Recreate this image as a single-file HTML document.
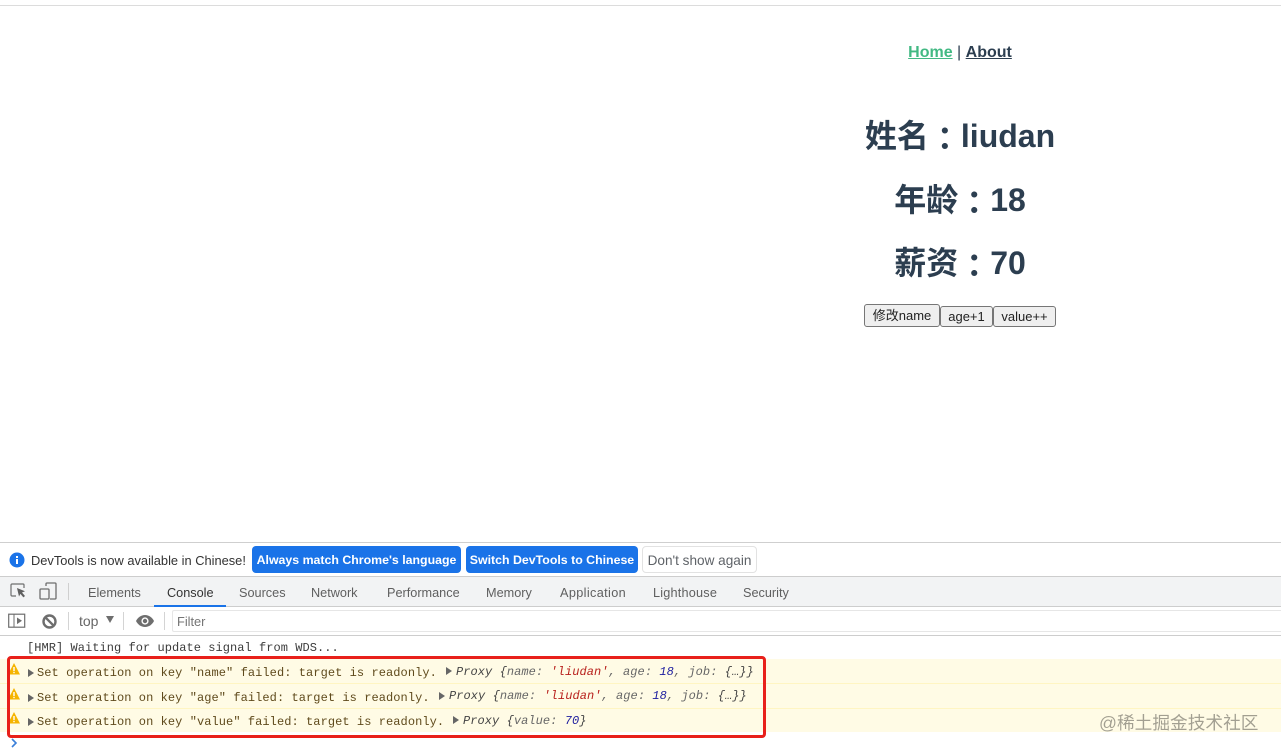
<!DOCTYPE html>
<html lang="zh">
<head>
<meta charset="utf-8">
<title>Readonly</title>
<style>
html,body{margin:0;padding:0;background:#fff;}
body{width:1281px;height:754px;position:relative;overflow:hidden;font-family:"Liberation Sans","Noto Sans CJK SC",sans-serif;}
.a{position:absolute;white-space:pre;}
.bar{position:absolute;left:0;width:1281px;}
.h{font-weight:700;font-size:32px;color:#2c3e50;left:640px;width:640px;text-align:center;line-height:40px;}
.c{font-family:"Noto Sans CJK TC",sans-serif;line-height:0;position:relative;top:3px;}
.btn{position:absolute;box-sizing:border-box;background:#efefef;border:1px solid #767676;border-radius:3px;font-size:13px;color:#222;text-align:center;line-height:19px;}
.tab{position:absolute;top:586px;font-size:12.7px;color:#5f5f5f;line-height:15px;white-space:pre;}
.ib{position:absolute;top:546px;height:27px;box-sizing:border-box;border-radius:4px;background:#1a73e8;color:#fff;font-size:12.35px;font-weight:700;line-height:29px;text-align:center;white-space:pre;}
.m{position:absolute;font-family:"Liberation Mono",monospace;font-size:12px;letter-spacing:.07px;line-height:14px;color:#5f4a1c;white-space:pre;}
.o{position:absolute;font-family:"Liberation Mono",monospace;font-size:12px;letter-spacing:.06px;font-style:italic;line-height:14px;color:#444;white-space:pre;}
.s{color:#b8201c}.n{color:#1c1c9f}.k{color:#666}
.tri{position:absolute;width:0;height:0;border-left:6px solid #666;border-top:4px solid transparent;border-bottom:4px solid transparent;}
svg{position:absolute;overflow:visible;}
</style>
</head>
<body>
<div class="bar" style="top:5px;height:1px;background:#dcdcdc"></div>

<div class="a" style="left:640px;width:640px;text-align:center;top:43px;font-size:16px;line-height:19px;font-weight:700;color:#2c3e50"><span style="color:#42b983;text-decoration:underline">Home</span><span style="font-weight:400"> | </span><span style="text-decoration:underline">About</span></div>

<div class="a h" style="top:116px">姓名<span class="c" lang="zh-TW">：</span>liudan</div>
<div class="a h" style="top:180px">年龄<span class="c" lang="zh-TW">：</span>18</div>
<div class="a h" style="top:243px">薪资<span class="c" lang="zh-TW">：</span>70</div>

<div class="btn" style="left:864px;top:304px;width:76px;height:23px;line-height:22px">修改name</div>
<div class="btn" style="left:940px;top:306px;width:53px;height:21px">age+1</div>
<div class="btn" style="left:993px;top:306px;width:63px;height:21px">value++</div>

<!-- infobar -->
<div class="bar" style="top:542px;height:1px;background:#cfcfcf"></div>
<div class="bar" style="top:543px;height:33px;background:#fff"></div>
<svg style="left:9px;top:552px" width="16" height="16" viewBox="0 0 16 16"><circle cx="8" cy="8" r="7.5" fill="#1a73e8"/><rect x="7" y="7" width="2" height="5" fill="#fff"/><rect x="7" y="4" width="2" height="2" fill="#fff"/></svg>
<div class="a" style="left:31px;top:553px;font-size:12.85px;line-height:15px;color:#333">DevTools is now available in Chinese!</div>
<div class="ib" style="left:252px;width:209px">Always match Chrome's language</div>
<div class="ib" style="left:466px;width:172px">Switch DevTools to Chinese</div>
<div class="ib" style="left:642px;width:115px;background:#fff;border:1px solid #e2e2e2;color:#5f6368;font-weight:400;line-height:27px;font-size:13.6px">Don't show again</div>

<!-- tabs -->
<div class="bar" style="top:576px;height:30px;background:#f2f3f4;border-top:1px solid #cdcdcd;box-sizing:border-box"></div>
<div class="bar" style="top:606px;height:1px;background:#cdcdcd"></div>
<svg style="left:10px;top:582px" width="18" height="18" viewBox="0 0 18 18" fill="none"><path d="M6 14H2a1 1 0 0 1-1-1V3a1 1 0 0 1 1-1h11a1 1 0 0 1 1 1v3" stroke="#6e6e6e" stroke-width="1.2"/><path d="M7 6l8 3.2-3 1.3 3 3.5-1.6 1.4-3-3.5L9 14.5z" fill="#5f5f5f"/></svg>
<svg style="left:39px;top:582px" width="18" height="18" viewBox="0 0 18 18" fill="none" stroke="#6e6e6e" stroke-width="1.3"><path d="M7 4V2a1 1 0 0 1 1-1h8a1 1 0 0 1 1 1v14a1 1 0 0 1-1 1h-5"/><rect x="1" y="7" width="9" height="10" rx="1"/></svg>
<div class="a" style="left:68px;top:583px;width:1px;height:17px;background:#cfcfcf"></div>
<div class="tab" style="left:88px">Elements</div>
<div class="tab" style="left:167px;color:#333">Console</div>
<div class="a" style="left:154px;top:605px;width:72px;height:2px;background:#1a73e8"></div>
<div class="tab" style="left:239px">Sources</div>
<div class="tab" style="left:311px">Network</div>
<div class="tab" style="left:387px">Performance</div>
<div class="tab" style="left:486px">Memory</div>
<div class="tab" style="left:560px;letter-spacing:.36px">Application</div>
<div class="tab" style="left:653px;letter-spacing:.2px">Lighthouse</div>
<div class="tab" style="left:743px">Security</div>

<!-- console toolbar -->
<div class="bar" style="top:607px;height:28px;background:#fff"></div>
<div class="bar" style="top:635px;height:1px;background:#cdcdcd"></div>
<svg style="left:8px;top:613px" width="18" height="16" viewBox="0 0 18 16" fill="none"><rect x=".7" y="1.2" width="16" height="13" stroke="#6e6e6e" stroke-width="1.2"/><rect x="5.5" y="1" width="1" height="13.4" fill="#6e6e6e"/><path d="M9 4.5l5 3.3-5 3.3z" fill="#6e6e6e"/></svg>
<svg style="left:42px;top:614px" width="15" height="15" viewBox="0 0 15 15" fill="none" stroke="#6e6e6e" stroke-width="2.4"><circle cx="7.5" cy="7.5" r="6"/><path d="M3.3 3.3l8.4 8.4"/></svg>
<div class="a" style="left:68px;top:612px;width:1px;height:18px;background:#d4d4d4"></div>
<div class="a" style="left:79px;top:614px;font-size:14px;line-height:15px;color:#666">top</div>
<div class="a" style="left:106px;top:616px;width:0;height:0;border-left:4px solid transparent;border-right:4px solid transparent;border-top:7px solid #6e6e6e"></div>
<div class="a" style="left:123px;top:612px;width:1px;height:18px;background:#d4d4d4"></div>
<svg style="left:136px;top:615px" width="18" height="12" viewBox="0 0 18 12"><path d="M9 0C5 0 1.700 2.500 0 6c1.700 3.500 5 6 9 6s7.300-2.500 9-6c-1.700-3.500-5-6-9-6z" fill="#6e6e6e"/><circle cx="9" cy="6" r="3.600" fill="#fff"/><circle cx="9" cy="6" r="2.200" fill="#6e6e6e"/></svg>
<div class="a" style="left:164px;top:612px;width:1px;height:18px;background:#d4d4d4"></div>
<div class="a" style="left:172px;top:610px;width:1109px;height:22px;box-sizing:border-box;border:1px solid #e6e6e6;border-right:0;border-radius:2px 0 0 2px"></div>
<div class="a" style="left:177px;top:614px;font-size:12.8px;line-height:15px;color:#757575">Filter</div>

<!-- console -->
<div class="a" style="left:27px;top:641px;font-family:'Liberation Mono',monospace;font-size:12px;letter-spacing:.05px;line-height:14px;color:#3c3c3c">[HMR] Waiting for update signal from WDS...</div>

<div class="bar" style="top:659px;height:73px;background:#fffbe5"></div>
<div class="bar" style="top:683px;height:1px;background:#fff5c2"></div>
<div class="bar" style="top:708px;height:1px;background:#fff5c2"></div>

<svg style="left:8px;top:663px" width="12" height="12" viewBox="0 0 12 12"><path d="M6 0L12 11.500H0z" fill="#f5b400"/><rect x="5.300" y="4" width="1.400" height="4" fill="#fff"/><rect x="5.300" y="8.800" width="1.400" height="1.400" fill="#fff"/></svg>
<svg style="left:8px;top:688px" width="12" height="12" viewBox="0 0 12 12"><path d="M6 0L12 11.500H0z" fill="#f5b400"/><rect x="5.300" y="4" width="1.400" height="4" fill="#fff"/><rect x="5.300" y="8.800" width="1.400" height="1.400" fill="#fff"/></svg>
<svg style="left:8px;top:712px" width="12" height="12" viewBox="0 0 12 12"><path d="M6 0L12 11.500H0z" fill="#f5b400"/><rect x="5.300" y="4" width="1.400" height="4" fill="#fff"/><rect x="5.300" y="8.800" width="1.400" height="1.400" fill="#fff"/></svg>

<div class="tri" style="left:28px;top:669px"></div>
<div class="tri" style="left:28px;top:694px"></div>
<div class="tri" style="left:28px;top:718px"></div>

<div class="m" style="left:37px;top:666px">Set operation on key "name" failed: target is readonly.</div>
<div class="m" style="left:37px;top:691px">Set operation on key "age" failed: target is readonly.</div>
<div class="m" style="left:37px;top:715px">Set operation on key "value" failed: target is readonly.</div>

<div class="tri" style="left:446px;top:667px"></div>
<div class="tri" style="left:439px;top:692px"></div>
<div class="tri" style="left:453px;top:716px"></div>

<div class="o" style="left:456px;top:665px">Proxy {<span class="k">name: </span><span class="s">'liudan'</span><span class="k">, age: </span><span class="n">18</span><span class="k">, job: </span>{…}}</div>
<div class="o" style="left:449px;top:689px">Proxy {<span class="k">name: </span><span class="s">'liudan'</span><span class="k">, age: </span><span class="n">18</span><span class="k">, job: </span>{…}}</div>
<div class="o" style="left:463px;top:714px">Proxy {<span class="k">value: </span><span class="n">70</span>}</div>

<svg style="left:10px;top:738px" width="8" height="10" viewBox="0 0 8 10" fill="none"><path d="M2 1l4 4-4 4" stroke="#3b7fd9" stroke-width="1.600"/></svg>

<!-- red annotation -->
<div class="a" style="left:7px;top:656px;width:759px;height:82px;box-sizing:border-box;border:3px solid #e8201a;border-radius:4px"></div>

<!-- watermark -->
<div class="a" style="left:1099px;top:712px;font-size:17.7px;line-height:22px;color:#000;opacity:.36;font-family:'Liberation Sans','Noto Sans CJK SC',sans-serif">@稀土掘金技术社区</div>
</body>
</html>
